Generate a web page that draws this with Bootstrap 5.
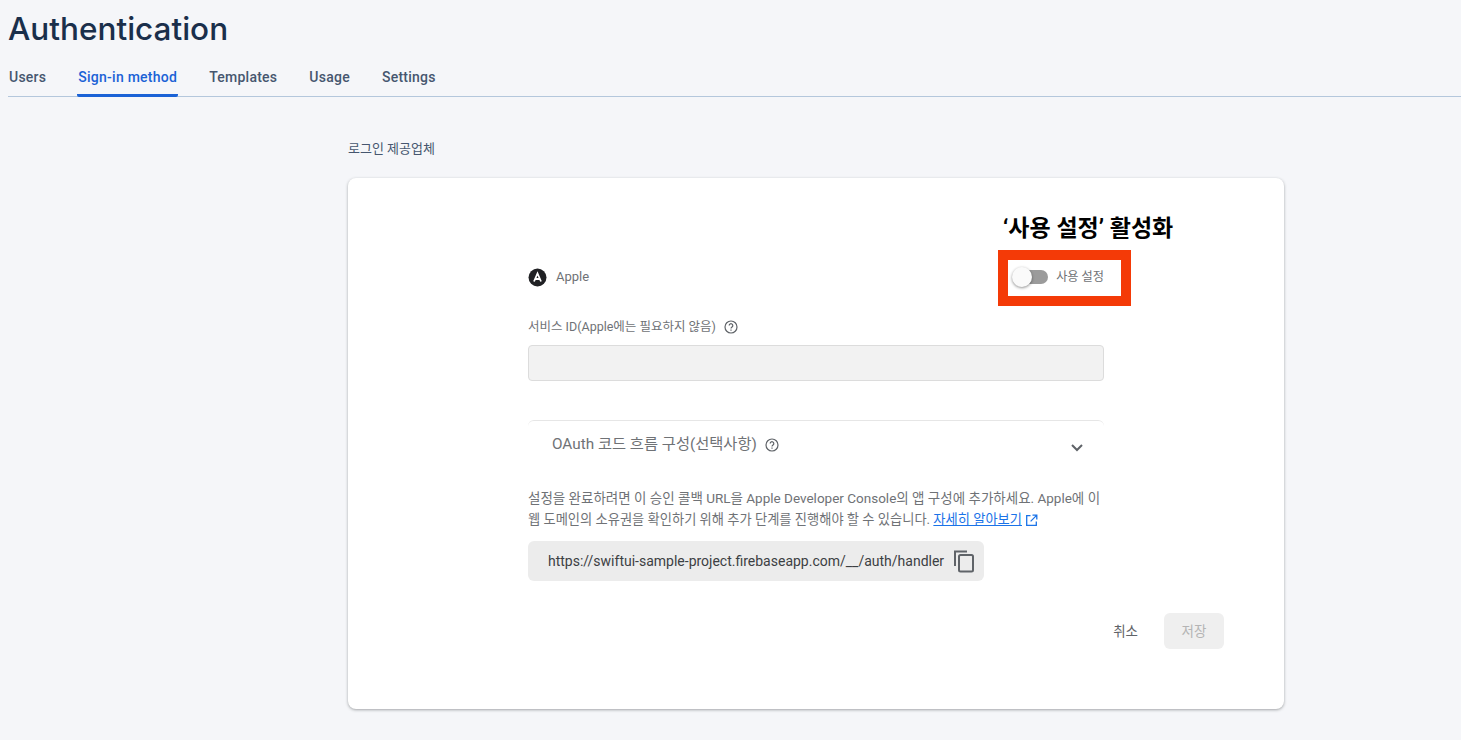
<!DOCTYPE html>
<html lang="ko">
  <head>
    <meta charset="UTF-8" />
    <meta name="viewport" content="width=device-width, initial-scale=1.0" />
    <title>Authentication</title>
    <link href="https://cdn.jsdelivr.net/npm/bootstrap@5.3.0/dist/css/bootstrap.min.css" rel="stylesheet" />
    <style>
      body {
        background-color: #f5f6f9;
        font-family: Roboto, "Noto Sans CJK KR", sans-serif;
        color: #5f6368;
        height: 740px;
        overflow: hidden;
      }
      .page-title {
        font-family: Inter, "Noto Sans CJK KR", sans-serif;
        font-size: 31.5px;
        font-weight: 500;
        line-height: 40px;
        color: #1a2f4b;
        margin: 0;
        padding: 9px 0 0 8px;
      }
      .tab-row {
        margin: 9px 0 0 8px;
        height: 39px;
        gap: 30px;
        border-bottom: 1px solid #b4c7dc;
      }
      .tab-item {
        font-size: 14px;
        font-weight: 500;
        letter-spacing: 0.25px;
        color: #46566f;
        text-decoration: none;
        line-height: 38px;
        height: 39px;
        padding: 0 1px;
      }
      .tab-item.active {
        color: #1a62d6;
        border-bottom: 3px solid #1a62d6;
        border-radius: 0 0 2px 2px;
      }
      .main-area {
        width: 936px;
        margin-left: 348px;
      }
      .section-label {
        font-size: 13px;
        line-height: 16px;
        color: #46566f;
        padding-top: 44px;
        margin-bottom: 21px;
      }
      .provider-card {
        position: relative;
        height: 531px;
        background: #fff;
        border-radius: 8px;
        box-shadow: 0 1px 3px rgba(60, 64, 67, 0.45);
        padding: 88px 60px 0 180px;
      }
      .form-area {
        width: 576px;
      }
      .provider-row {
        height: 22px;
      }
      .provider-name {
        font-size: 13px;
        margin-left: 9px;
        color: #6f7276;
      }
      .toggle-wrap {
        font-size: 12.2px;
        color: #6f7276;
      }
      .toggle-track {
        position: relative;
        display: block;
        width: 34px;
        height: 14px;
        background: #9b9b9b;
        border-radius: 7px;
        margin-right: 8px;
      }
      .toggle-knob {
        position: absolute;
        left: -2px;
        top: -3px;
        width: 20px;
        height: 20px;
        border-radius: 50%;
        background: #fafafa;
        box-shadow: 0 1px 3px rgba(0, 0, 0, 0.45);
      }
      .field-label {
        font-size: 12.5px;
        line-height: 16px;
        color: #6f7276;
        margin-top: 31px;
      }
      .disabled-input {
        height: 36px;
        margin-top: 10px;
        background: #f2f2f2;
        border: 1px solid #dcdcdc;
        border-radius: 4px;
      }
      .oauth-panel {
        margin-top: 39px;
        height: 54px;
        padding: 0 20px 6px 24px;
        border-top: 1px solid #e6e6e6;
        border-radius: 6px 6px 0 0;
        font-size: 15.3px;
        color: #6f7276;
      }
      .oauth-chevron {
        margin-top: 6px;
      }
      .help-text {
        line-height: 21px;
        color: #6f7276;
        margin: 14px 0 0;
        white-space: nowrap;
      }
      .help-first {
        font-size: 13.5px;
      }
      .help-second {
        font-size: 13.25px;
      }
      .help-text a {
        color: #1a73e8;
      }
      .url-box {
        width: 456px;
        height: 40px;
        margin-top: 11px;
        padding: 0 9px 0 20px;
        background: #ececec;
        border-radius: 6px;
        font-size: 14px;
        color: #3c4043;
        white-space: nowrap;
      }
      .action-row {
        width: 696px;
        margin-top: 32px;
        gap: 26px;
      }
      .cancel-link {
        font-size: 13.5px;
        color: #5f6368;
      }
      .save-button {
        width: 60px;
        height: 36px;
        background: #efefef;
        border-radius: 6px;
        font-size: 13.5px;
        color: #b4b4b4;
      }
      .annotation-text {
        position: absolute;
        left: 655px;
        top: 35px;
        font-size: 23px;
        font-weight: 700;
        line-height: 32px;
        color: #000;
        white-space: nowrap;
      }
      .annotation-box {
        position: absolute;
        left: 650px;
        top: 72px;
        width: 133px;
        height: 56px;
        border: 10px solid #f43a07;
      }
    </style>
  </head>
  <body>
    <h1 class="page-title">Authentication</h1>
    <div class="tab-row d-flex">
      <a class="tab-item" href="#">Users</a>
      <a class="tab-item active" href="#">Sign-in method</a>
      <a class="tab-item" href="#">Templates</a>
      <a class="tab-item" href="#">Usage</a>
      <a class="tab-item" href="#">Settings</a>
    </div>

    <div class="main-area">
      <div class="section-label">로그인 제공업체</div>
      <div class="provider-card">
        <div class="form-area">
          <div class="provider-row d-flex align-items-center justify-content-between">
            <div class="d-flex align-items-center">
              <svg width="19" height="19" viewBox="0 0 19 19">
                <circle cx="9.5" cy="9.5" r="9" fill="#202124" />
                <path d="M6 13.500 9.500 5.500 13 13.500M7.200 11h4.600" fill="none" stroke="#fff" stroke-width="1.800" />
              </svg>
              <span class="provider-name">Apple</span>
            </div>
            <div class="toggle-wrap d-flex align-items-center">
              <span class="toggle-track"><span class="toggle-knob"></span></span>
              <span>사용 설정</span>
            </div>
          </div>

          <div class="field-label d-flex align-items-center">
            서비스 ID(Apple에는 필요하지 않음)
            <svg class="ms-2" width="14" height="14" viewBox="0 0 14 14" fill="none" stroke="#5f6368" stroke-width="1.2">
              <circle cx="7" cy="7" r="6" />
              <path d="M5.2 5.5a1.8 1.8 0 1 1 2.8 1.5c-.7.5-1 .8-1 1.6M7 9.6v1.2" />
            </svg>
          </div>
          <div class="disabled-input"></div>

          <div class="oauth-panel d-flex align-items-center justify-content-between">
            <div class="d-flex align-items-center">
              OAuth 코드 흐름 구성(선택사항)
              <svg class="ms-2" width="14" height="14" viewBox="0 0 14 14" fill="none" stroke="#5f6368" stroke-width="1.2">
                <circle cx="7" cy="7" r="6" />
                <path d="M5.2 5.5a1.8 1.8 0 1 1 2.8 1.5c-.7.5-1 .8-1 1.6M7 9.6v1.2" />
              </svg>
            </div>
            <svg class="oauth-chevron" width="14" height="10" viewBox="0 0 14 10" fill="none" stroke="#5f6368" stroke-width="2">
              <path d="M2 2l5 5 5-5" />
            </svg>
          </div>

          <div class="help-text">
            <div class="help-first">설정을 완료하려면 이 승인 콜백 URL을 Apple Developer Console의 앱 구성에 추가하세요. Apple에 이</div>
            <div class="help-second">
              웹 도메인의 소유권을 확인하기 위해 추가 단계를 진행해야 할 수 있습니다.
              <a href="#">자세히 알아보기</a>
              <svg width="13" height="13" viewBox="0 0 13 13" fill="none" stroke="#1a73e8" stroke-width="1.3">
                <path d="M5.5 1.7H1.7v9.6h9.6V7.5M7.5 1.2h4.3v4.3M11.6 1.4 5.6 7.4" />
              </svg>
            </div>
          </div>

          <div class="url-box d-flex align-items-center justify-content-between">
            <span>https://swiftui-sample-project.firebaseapp.com/__/auth/handler</span>
            <svg width="22" height="24" viewBox="0 0 22 24" fill="none" stroke="#5f6368" stroke-width="2">
              <path d="M2 17V2.5h12" />
              <rect x="6" y="6" width="14" height="16.500" rx="1.500" />
            </svg>
          </div>
        </div>

        <div class="action-row d-flex align-items-center justify-content-end">
          <span class="cancel-link">취소</span>
          <span class="save-button d-flex align-items-center justify-content-center">저장</span>
        </div>

        <div class="annotation-text">‘사용 설정’ 활성화</div>
        <div class="annotation-box"></div>
      </div>
    </div>
    <script src="https://cdn.jsdelivr.net/npm/bootstrap@5.3.0/dist/js/bootstrap.bundle.min.js"></script>
  </body>
</html>
